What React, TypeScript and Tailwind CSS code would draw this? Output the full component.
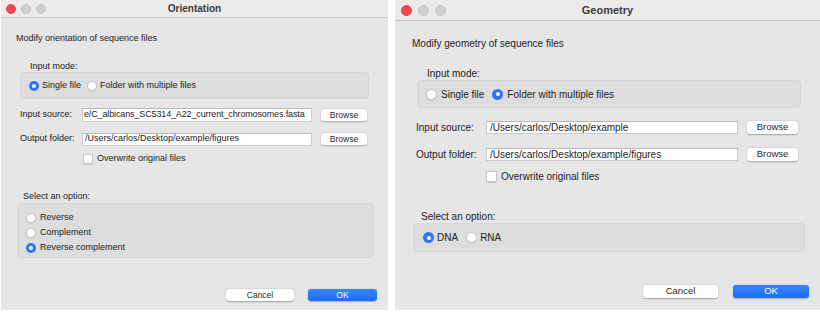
import React from 'react';

function Lights({ big }: { big?: boolean }) {
  const dot = big ? 'w-[11px] h-[11px]' : 'w-[10px] h-[10px]';
  return (
    <div className={`flex items-center ${big ? 'gap-[6px] pl-[6px]' : 'gap-[5px] pl-[5px]'}`}>
      <span className={`${dot} rounded-full bg-[#f4484a] border border-[#e0403f]`} />
      <span className={`${dot} rounded-full bg-[#cfcfcf] border border-[#c4c4c4]`} />
      <span className={`${dot} rounded-full bg-[#cfcfcf] border border-[#c4c4c4]`} />
    </div>
  );
}

function Radio({ on, big }: { on?: boolean; big?: boolean }) {
  const size = big ? 'w-[11px] h-[11px]' : 'w-[10px] h-[10px]';
  if (on) {
    return (
      <span className={`${size} rounded-full bg-[#2f74f6] flex items-center justify-center shrink-0`}>
        <span className="w-[4px] h-[4px] rounded-full bg-white" />
      </span>
    );
  }
  return <span className={`${size} rounded-full bg-white border border-[#c6c6c6] shadow-[0_0.5px_1px_rgba(0,0,0,0.15)] shrink-0`} />;
}

function Checkbox({ big }: { big?: boolean }) {
  return (
    <span
      className={`${big ? 'w-[11px] h-[11px]' : 'w-[10px] h-[10px]'} rounded-[2px] bg-white border border-[#c2c2c2] shadow-[0_0.5px_1px_rgba(0,0,0,0.12)] shrink-0`}
    />
  );
}

function Btn({ children, className }: { children: React.ReactNode; className: string }) {
  return (
    <div
      className={`rounded-[3px] bg-white shadow-[0_0.5px_1.5px_rgba(0,0,0,0.3)] flex items-center justify-center text-[#2a2a2a] ${className}`}
    >
      {children}
    </div>
  );
}

function OkBtn({ className }: { className: string }) {
  return (
    <div
      className={`rounded-[3px] bg-gradient-to-b from-[#3a86f8] to-[#1c6cf5] shadow-[0_0.5px_1.5px_rgba(0,0,0,0.25)] flex items-center justify-center text-white ${className}`}
    >
      OK
    </div>
  );
}

function Field({ value, className }: { value: string; className: string }) {
  return (
    <div
      className={`bg-white border border-[#cbcbcb] border-t-[#b9b9b9] flex items-center overflow-hidden whitespace-nowrap text-[#1e1e1e] ${className}`}
    >
      {value}
    </div>
  );
}

function OrientationWindow() {
  return (
    <div className="w-[387px] h-[310px] ml-px bg-[#e6e6e6] flex flex-col text-[9px] text-[#222222]">
      <div className="h-[18px] shrink-0 bg-[#ecebea] border-b border-[#c8c8c8] grid grid-cols-[1fr_auto_1fr] items-center">
        <Lights />
        <div className="text-[10px] font-bold text-[#3b3b3b]">Orientation</div>
        <div />
      </div>

      <div className="mt-[14px] h-[12px] leading-[12px] pl-[15px]">Modify orientation of sequence files</div>

      <div className="mt-[17px] h-[11px] leading-[11px] pl-[29px]">Input mode:</div>
      <div className="ml-[19px] w-[349px] h-[27px] rounded-[4px] bg-[#dddddd] border border-[#d6d6d6] flex items-center pl-[8px] gap-[6px]">
        <div className="flex items-center gap-[3px]">
          <Radio on />
          <span>Single file</span>
        </div>
        <div className="flex items-center gap-[3px]">
          <Radio />
          <span>Folder with multiple files</span>
        </div>
      </div>

      <div className="mt-[9px] h-[14px] flex items-center pl-[19px]">
        <span className="w-[62px] whitespace-nowrap">Input source:</span>
        <Field
          value="e/C_albicans_SC5314_A22_current_chromosomes.fasta"
          className="w-[230px] h-[14px] pl-px tracking-[-0.015em]"
        />
        <Btn className="ml-[9px] w-[46px] h-[12px] text-[8.5px]">Browse</Btn>
      </div>
      <div className="mt-[10px] h-[14px] flex items-center pl-[19px]">
        <span className="w-[62px] whitespace-nowrap">Output folder:</span>
        <Field value="/Users/carlos/Desktop/example/figures" className="w-[230px] h-[13px] pl-[2px]" />
        <Btn className="ml-[9px] w-[46px] h-[12px] text-[8.5px]">Browse</Btn>
      </div>
      <div className="mt-[7px] h-[12px] flex items-center gap-[4px] pl-[82px]">
        <Checkbox />
        <span>Overwrite original files</span>
      </div>

      <div className="mt-[26px] h-[11px] leading-[11px] pl-[22px]">Select an option:</div>
      <div className="mt-px ml-[16px] w-[357px] h-[55px] rounded-[4px] bg-[#dddddd] border border-[#d6d6d6] flex flex-col pt-[6px] pl-[8px]">
        {['Reverse', 'Complement', 'Reverse complement'].map((t, i) => (
          <div key={t} className="h-[15px] flex items-center gap-[4px]">
            <Radio on={i === 2} />
            <span>{t}</span>
          </div>
        ))}
      </div>

      <div className="mt-[31px] flex pl-[225px] gap-[14px] text-[8.5px]">
        <Btn className="w-[68px] h-[12px]">Cancel</Btn>
        <OkBtn className="w-[69px] h-[12px]" />
      </div>
    </div>
  );
}

function GeometryWindow() {
  return (
    <div className="w-[425px] h-[310px] bg-[#e6e6e6] flex flex-col text-[10px] text-[#222222]">
      <div className="h-[21px] shrink-0 bg-[#ecebea] border-b border-[#c3c3c3] grid grid-cols-[1fr_auto_1fr] items-center">
        <Lights big />
        <div className="text-[11px] font-bold text-[#3b3b3b]">Geometry</div>
        <div />
      </div>

      <div className="mt-[16px] h-[13px] leading-[13px] pl-[17px]">Modify geometry of sequence files</div>

      <div className="mt-[18px] h-[12px] leading-[12px] pl-[32px]">Input mode:</div>
      <div className="ml-[22px] w-[384px] h-[28px] rounded-[4px] bg-[#dddddd] border border-[#d6d6d6] flex items-center pl-[8px] gap-[8px]">
        <div className="flex items-center gap-[4px]">
          <Radio big />
          <span>Single file</span>
        </div>
        <div className="flex items-center gap-[4px]">
          <Radio big on />
          <span>Folder with multiple files</span>
        </div>
      </div>

      <div className="mt-[12px] h-[14px] flex items-center pl-[21px]">
        <span className="w-[70px] whitespace-nowrap">Input source:</span>
        <Field value="/Users/carlos/Desktop/example" className="w-[252px] h-[13px] pl-[3px]" />
        <Btn className="ml-[9px] w-[51px] h-[13px] text-[9.5px]">Browse</Btn>
      </div>
      <div className="mt-[13px] h-[14px] flex items-center pl-[21px]">
        <span className="w-[70px] whitespace-nowrap">Output folder:</span>
        <Field value="/Users/carlos/Desktop/example/figures" className="w-[252px] h-[13px] pl-[3px]" />
        <Btn className="ml-[9px] w-[51px] h-[13px] text-[9.5px]">Browse</Btn>
      </div>
      <div className="mt-[9px] h-[12px] flex items-center gap-[4px] pl-[91px]">
        <Checkbox big />
        <span>Overwrite original files</span>
      </div>

      <div className="mt-[29px] h-[12px] leading-[12px] pl-[26px]">Select an option:</div>
      <div className="ml-[18px] w-[392px] h-[29px] rounded-[4px] bg-[#dddddd] border border-[#d6d6d6] flex items-center pl-[9px] gap-[8px]">
        <div className="flex items-center gap-[3px]">
          <Radio big on />
          <span>DNA</span>
        </div>
        <div className="flex items-center gap-[3px]">
          <Radio big />
          <span>RNA</span>
        </div>
      </div>

      <div className="mt-[33px] flex pl-[248px] gap-[15px] text-[9.5px]">
        <Btn className="w-[75px] h-[13px]">Cancel</Btn>
        <OkBtn className="w-[76px] h-[13px]" />
      </div>
    </div>
  );
}

export default function App() {
  return (
    <div className="w-[820px] h-[312px] bg-white flex gap-[7px] font-['Liberation_Sans',Arial,sans-serif] antialiased">
      <OrientationWindow />
      <GeometryWindow />
    </div>
  );
}
